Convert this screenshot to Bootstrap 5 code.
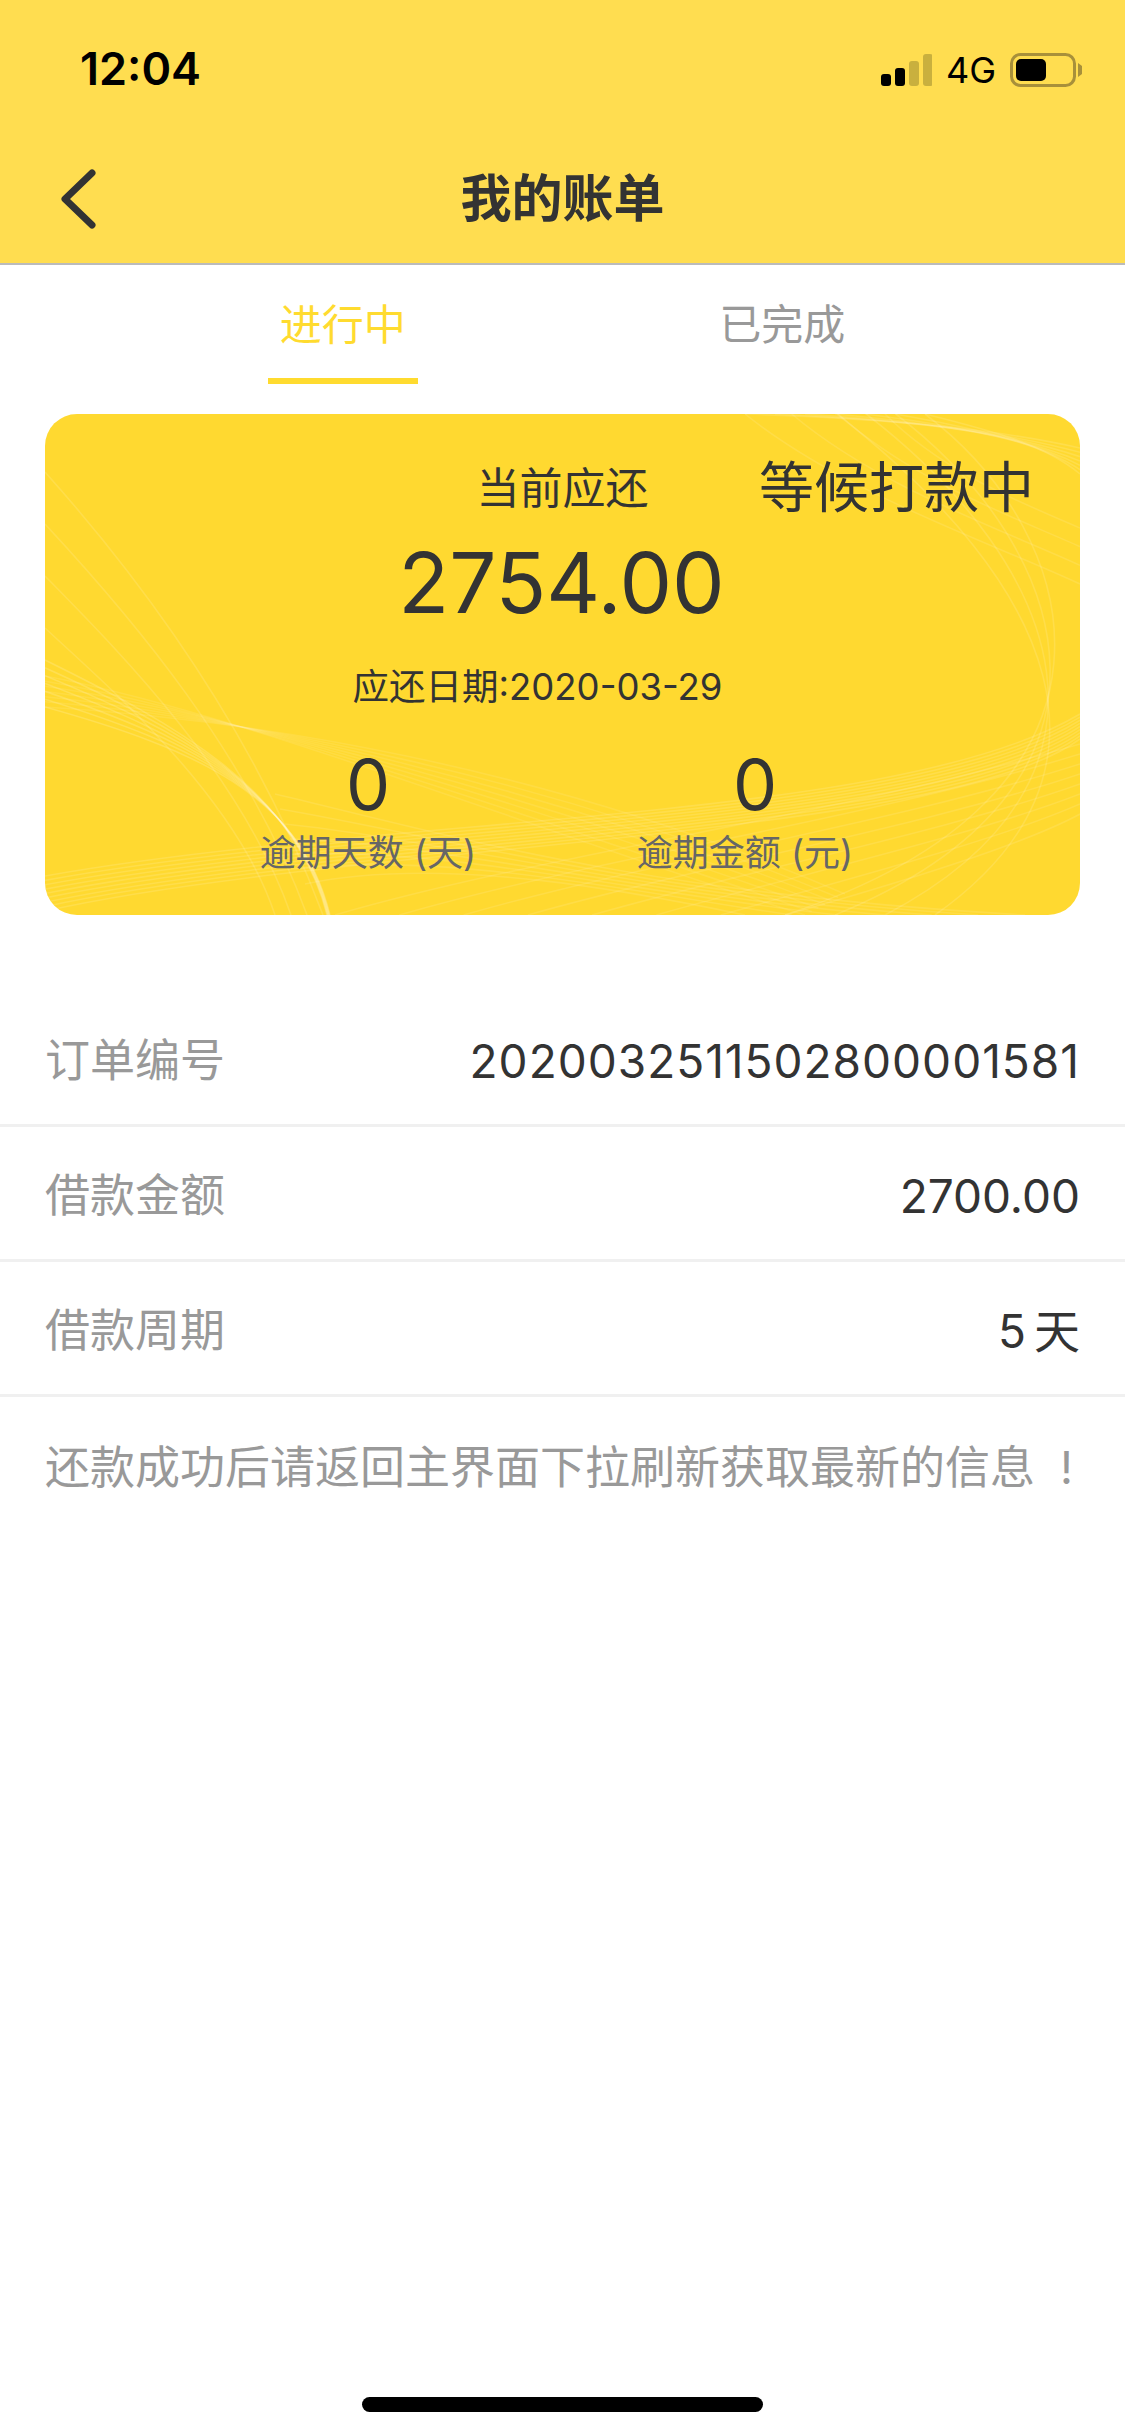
<!DOCTYPE html>
<html lang="zh-CN">
<head>
  <meta charset="UTF-8">
  <meta name="viewport" content="width=device-width, initial-scale=1.0">
  <title>我的账单</title>
  <link rel="stylesheet" href="https://cdn.jsdelivr.net/npm/bootstrap@5.3.3/dist/css/bootstrap.min.css">
  <script src="https://cdn.jsdelivr.net/npm/bootstrap@5.3.3/dist/js/bootstrap.bundle.min.js"></script>
  <style>
    body { width: 1125px; height: 2436px; overflow: hidden; background: #fff; color: #333;
      font-family: Inter, "Noto Sans CJK SC", sans-serif; }
    .top-head { background: #ffdd50; height: 265px; border-bottom: 2px solid #bbb; }
    .status-row { height: 132px; padding: 0 43px 38px 80px; color: #000; }
    .status-time { font-size: 45px; font-weight: 600; line-height: 50px; }
    .status-net { font-size: 36px; line-height: 40px; margin: 0 14px 0 14px; }
    .title-row { height: 131px; padding-top: 2px; }
    .title-side { width: 140px; padding-left: 60px; }
    .title-text { font-size: 51px; font-weight: 700; line-height: 60px; }
    .bill-tabs { padding: 0 123px; height: 119px; }
    .bill-tabs .nav-link { padding: 0; color: #999; font-size: 42px; line-height: 60px; }
    .bill-tabs .nav-link span { display: inline-block; padding: 30px 12px 23px; border-bottom: 6px solid transparent; }
    .bill-tabs .nav-link.active { color: #ffdb2f; }
    .bill-tabs .nav-link.active span { border-bottom-color: #ffdb2f; }
    .bill-card { margin: 30px 45px 0; height: 501px; background: #ffd930; border-radius: 32px; overflow: hidden; padding-top: 49px; }
    .card-waves { top: 0; left: 0; }
    .card-body-text { z-index: 1; }
    .due-label { font-size: 43px; line-height: 50px; }
    .status-tag { top: 43px; right: 46px; font-size: 55px; line-height: 60px; z-index: 1; }
    .due-amount { font-size: 83.5px; line-height: 100px; margin-top: 20px; padding-right: 2px; }
    .due-date { font-size: 36.5px; line-height: 50px; margin-top: 29px; padding-right: 50px; }
    .over-row { margin-top: 37px; padding-right: 12px; gap: 77px; }
    .over-item { width: 300px; }
    .over-num { font-size: 70px; line-height: 72px; }
    .over-num-shift { padding-left: 20px; }
    .over-label { font-size: 36px; line-height: 44px; margin-top: 10px; color: #666; }
    .info-list { margin-top: 77px; }
    .info-list .list-group-item { height: 135px; padding: 6px 45px 0 45px; border: 0; border-bottom: 3px solid #f0f0f0; font-size: 45px; line-height: 60px; color: #333; }
    .info-value { font-size: 46px; }
    .order-no { letter-spacing: 1px; }
    .info-key { color: #999; }
    .info-note { font-size: 44.5px; }
    .note-mark { padding-right: 7px; }
    .home-bar { left: 362px; top: 2397px; width: 401px; height: 15px; background: #000; border-radius: 8px; }
  </style>
</head>
<body>

  <!-- Header -->
  <header class="top-head">
    <div class="status-row d-flex justify-content-between align-items-end">
      <span class="status-time">12:04</span>
      <div class="d-flex align-items-center mb-1">
        <svg width="51" height="32" viewBox="0 0 51 32">
          <rect x="0" y="20" width="10" height="12" rx="3" fill="#000"/>
          <rect x="14" y="14" width="10" height="18" rx="3" fill="#000"/>
          <rect x="28" y="7" width="10" height="25" rx="3" fill="#c9b03e"/>
          <rect x="42" y="0" width="10" height="32" rx="3" fill="#c9b03e"/>
        </svg>
        <span class="status-net">4G</span>
        <svg width="72" height="34" viewBox="0 0 72 34">
          <rect x="1.5" y="1.5" width="63" height="31" rx="9" fill="none" stroke="#a8903a" stroke-width="3"/>
          <rect x="6" y="6" width="30" height="22" rx="5" fill="#000"/>
          <path d="M68 10 L72 13 V21 L68 24 Z" fill="#a8903a"/>
        </svg>
      </div>
    </div>
    <div class="title-row d-flex align-items-center">
      <div class="title-side">
        <svg class="d-block" width="36" height="60" viewBox="0 0 36 60">
          <path d="M32 4 L5 30 L32 56" fill="none" stroke="#333" stroke-width="7" stroke-linecap="round" stroke-linejoin="round"/>
        </svg>
      </div>
      <div class="title-text flex-fill text-center">我的账单</div>
      <div class="title-side"></div>
    </div>
  </header>

  <!-- Tabs -->
  <ul class="nav nav-fill bill-tabs">
    <li class="nav-item"><a class="nav-link active" href="#"><span>进行中</span></a></li>
    <li class="nav-item"><a class="nav-link" href="#"><span>已完成</span></a></li>
  </ul>

  <!-- Bill card -->
  <section class="bill-card position-relative text-center">
    <svg id="waves" class="card-waves position-absolute" width="1035" height="501" viewBox="0 0 1035 501"></svg>
    <div class="status-tag position-absolute">等候打款中</div>
    <div class="card-body-text position-relative">
      <div class="due-label">当前应还</div>
      <div class="due-amount">2754.00</div>
      <div class="due-date">应还日期:2020-03-29</div>
      <div class="over-row d-flex justify-content-center">
        <div class="over-item">
          <div class="over-num">0</div>
          <div class="over-label">逾期天数 (天)</div>
        </div>
        <div class="over-item">
          <div class="over-num over-num-shift">0</div>
          <div class="over-label">逾期金额 (元)</div>
        </div>
      </div>
    </div>
  </section>

  <!-- Details -->
  <div class="list-group list-group-flush info-list">
    <div class="list-group-item d-flex justify-content-between align-items-center">
      <span class="info-key">订单编号</span><span class="info-value order-no">2020032511502800001581</span>
    </div>
    <div class="list-group-item d-flex justify-content-between align-items-center">
      <span class="info-key">借款金额</span><span class="info-value">2700.00</span>
    </div>
    <div class="list-group-item d-flex justify-content-between align-items-center">
      <span class="info-key">借款周期</span><span class="info-value">5<span class="ms-2">天</span></span>
    </div>
    <div class="list-group-item d-flex justify-content-between align-items-center info-note">
      <span class="info-key">还款成功后请返回主界面下拉刷新获取最新的信息</span><span class="info-key note-mark">!</span>
    </div>
  </div>

  <div class="home-bar position-absolute"></div>

  <script>
    // fans of thin white curves on the card: each entry blends curve a into curve b
    const fans = [
      { n: 7, o: .16, a: [0,293, 150,335, 255,380, 285,501], b: [0,246, 130,310, 250,375, 282,501] },
      { n: 7, o: .09, a: [0,293, 200,305, 500,350, 800,480], b: [0,262, 200,300, 500,420, 760,501] },
      { n: 4, o: .13, a: [0,58, 100,170, 210,320, 278,501], b: [0,214, 60,270, 190,380, 230,501] },
      { n: 9, o: .13, a: [0,462, 350,400, 850,410, 1035,300], b: [0,497, 300,430, 900,425, 1035,325] },
      { n: 4, o: .13, a: [792,0, 1010,170, 1090,360, 890,501], b: [880,0, 1040,120, 1110,380, 740,501] },
      { n: 7, o: .13, a: [700,0, 850,5, 950,15, 1035,34], b: [880,0, 940,15, 1000,30, 1035,60] },
      { n: 4, o: .11, a: [840,0, 900,60, 980,90, 1035,114], b: [700,0, 800,80, 950,130, 1035,170] },
      { n: 8, o: .11, a: [290,501, 500,440, 800,400, 1035,330], b: [740,501, 850,470, 980,430, 1035,400] },
      { n: 7, o: .11, a: [260,470, 400,440, 600,480, 700,501], b: [230,380, 400,420, 600,480, 980,501] }
    ];
    const svg = document.getElementById('waves');
    let html = '';
    fans.forEach(f => {
      for (let i = 0; i < f.n; i++) {
        const t = f.n > 1 ? i / (f.n - 1) : 0;
        const p = f.a.map((v, k) => (v + (f.b[k] - v) * t).toFixed(1));
        html += `<path stroke-opacity="${f.o}" d="M${p[0]} ${p[1]} C${p[2]} ${p[3]} ${p[4]} ${p[5]} ${p[6]} ${p[7]}"/>`;
      }
    });
    svg.innerHTML = `<g fill="none" stroke="#fff" stroke-width="1.6">${html}</g>`;
  </script>
</body>
</html>
